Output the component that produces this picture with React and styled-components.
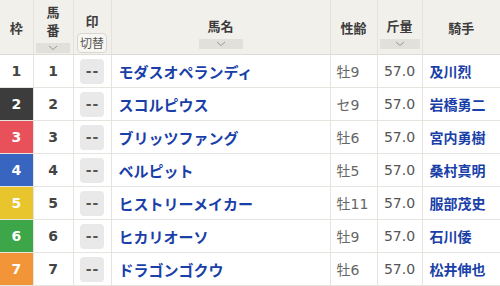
import React from 'react';
import styled, { createGlobalStyle } from 'styled-components';

const GlobalStyle = createGlobalStyle`
  body {
    margin: 0;
    background: #fff;
    font-family: "Noto Sans CJK JP", "Noto Sans", sans-serif;
  }
`;

const Table = styled.table`
  width: 500px;
  border-collapse: collapse;
  table-layout: fixed;
`;

const HeadCell = styled.th`
  background: #f2f0eb;
  border-left: 1px solid #e4e2dc;
  border-bottom: 1px solid #dedcd6;
  height: 54px;
  padding: 0;
  color: #3c3c3c;
  font-size: 13px;
  font-weight: bold;
  vertical-align: middle;
  text-align: center;
  &:first-child {
    border-left: none;
  }
`;

const HeadInner = styled.div`
  display: flex;
  flex-direction: column;
  align-items: center;
  justify-content: center;
  height: 54px;
  padding-top: ${({ $sort }) => ($sort ? '10px' : '2px')};
  box-sizing: border-box;
`;

const Stack = styled.span`
  line-height: 18px;
`;

const SortBox = styled.div`
  width: ${({ $w }) => $w}px;
  height: 10px;
  margin-top: 4px;
  background: #e2e0db;
  display: flex;
  align-items: center;
  justify-content: center;
`;

const Toggle = styled.div`
  margin-top: 3px;
  border: 1px solid #d8d6d0;
  border-radius: 4px;
  background: #f7f6f3;
  color: #555;
  font-size: 12px;
  font-weight: normal;
  line-height: 18px;
  padding: 0 2px;
`;

const Row = styled.tr`
  background: #fff;
`;

const Cell = styled.td`
  height: 32px;
  padding: 0;
  border-left: 1px solid #e6e4df;
  border-bottom: 1px solid #e6e4df;
  text-align: ${({ $align }) => $align || 'center'};
  padding-left: ${({ $pad }) => $pad || 0}px;
  color: #555;
  font-family: "DejaVu Sans", "Noto Sans CJK JP", sans-serif;
  font-size: 14px;
  white-space: nowrap;
  overflow: hidden;
  &:first-child {
    border-left: none;
  }
`;

const FrameCell = styled(Cell)`
  background: ${({ $bg }) => $bg};
  color: ${({ $fg }) => $fg};
  font-weight: bold;
  font-size: 14px;
`;

const NumCell = styled(Cell)`
  font-weight: bold;
  color: #444;
  font-size: 14px;
`;

const AgeCell = styled(Cell)`
  color: #666;
  font-size: 14px;
`;

const MarkButton = styled.div`
  width: 24px;
  height: 25px;
  margin: 0 auto;
  border-radius: 4px;
  background: #e9e9e9;
  color: #555;
  font-weight: bold;
  font-size: 14px;
  letter-spacing: 1px;
  padding-left: 1px;
  box-sizing: border-box;
  display: flex;
  align-items: center;
  justify-content: center;
`;

const NameLink = styled.a`
  color: #1a3fa8;
  font-family: "Noto Sans CJK JP", sans-serif;
  font-weight: bold;
  font-size: 15px;
  text-decoration: none;
`;

const JockeyLink = styled(NameLink)`
  font-size: 14px;
`;

const Chevron = () => (
  <svg width="10" height="6" viewBox="0 0 10 6">
    <path d="M1 1l4 3.5L9 1" fill="none" stroke="#9a9893" strokeWidth="1" />
  </svg>
);

const frames = {
  1: ['#fff', '#444'],
  2: ['#3c3c3c', '#fff'],
  3: ['#e8505a', '#fff'],
  4: ['#3865bf', '#fff'],
  5: ['#e8c52c', '#fff'],
  6: ['#3ca648', '#fff'],
  7: ['#f29438', '#fff'],
};

const horses = [
  { no: 1, name: 'モダスオペランディ', age: '牡9', weight: '57.0', jockey: '及川烈' },
  { no: 2, name: 'スコルピウス', age: 'セ9', weight: '57.0', jockey: '岩橋勇二' },
  { no: 3, name: 'ブリッツファング', age: '牡6', weight: '57.0', jockey: '宮内勇樹' },
  { no: 4, name: 'ベルピット', age: '牡5', weight: '57.0', jockey: '桑村真明' },
  { no: 5, name: 'ヒストリーメイカー', age: '牡11', weight: '57.0', jockey: '服部茂史' },
  { no: 6, name: 'ヒカリオーソ', age: '牡9', weight: '57.0', jockey: '石川倭' },
  { no: 7, name: 'ドラゴンゴクウ', age: '牡6', weight: '57.0', jockey: '松井伸也' },
];

export default function App() {
  return (
    <>
      <GlobalStyle />
      <Table>
        <colgroup>
          <col style={{ width: 33 }} />
          <col style={{ width: 40 }} />
          <col style={{ width: 38 }} />
          <col style={{ width: 219 }} />
          <col style={{ width: 47 }} />
          <col style={{ width: 45 }} />
          <col style={{ width: 78 }} />
        </colgroup>
        <thead>
          <tr>
            <HeadCell>枠</HeadCell>
            <HeadCell>
              <HeadInner>
                <Stack>馬</Stack>
                <Stack>番</Stack>
                <SortBox $w={34}>
                  <Chevron />
                </SortBox>
              </HeadInner>
            </HeadCell>
            <HeadCell>
              <HeadInner $sort>
                <span>印</span>
                <Toggle>切替</Toggle>
              </HeadInner>
            </HeadCell>
            <HeadCell>
              <HeadInner $sort>
                <span>馬名</span>
                <SortBox $w={44}>
                  <Chevron />
                </SortBox>
              </HeadInner>
            </HeadCell>
            <HeadCell>性齢</HeadCell>
            <HeadCell>
              <HeadInner $sort>
                <span>斤量</span>
                <SortBox $w={40}>
                  <Chevron />
                </SortBox>
              </HeadInner>
            </HeadCell>
            <HeadCell>騎手</HeadCell>
          </tr>
        </thead>
        <tbody>
          {horses.map((h) => (
            <Row key={h.no}>
              <FrameCell $bg={frames[h.no][0]} $fg={frames[h.no][1]}>
                {h.no}
              </FrameCell>
              <NumCell>{h.no}</NumCell>
              <Cell>
                <MarkButton>--</MarkButton>
              </Cell>
              <Cell $align="left" $pad={7}>
                <NameLink href="#">{h.name}</NameLink>
              </Cell>
              <AgeCell $align="left" $pad={6}>
                {h.age}
              </AgeCell>
              <Cell>{h.weight}</Cell>
              <Cell $align="left" $pad={7}>
                <JockeyLink href="#">{h.jockey}</JockeyLink>
              </Cell>
            </Row>
          ))}
        </tbody>
      </Table>
    </>
  );
}
